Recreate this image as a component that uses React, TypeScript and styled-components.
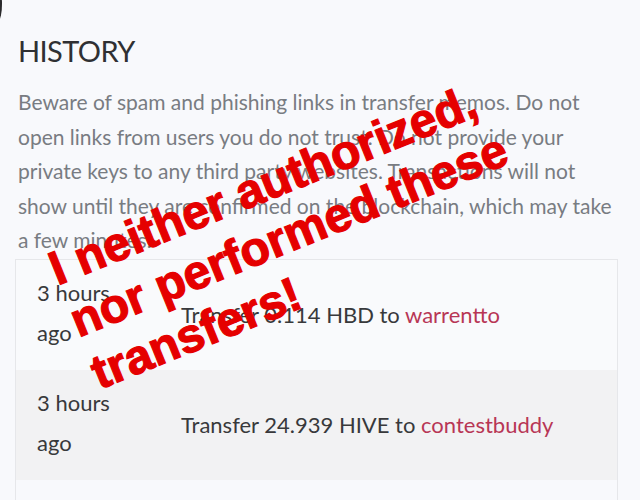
import React from 'react';
import styled, { createGlobalStyle } from 'styled-components';

type Transfer = {
	time: string;
	amount: string;
	to: string;
};

const transfers: Transfer[] = [
	{ time: '3 hours ago', amount: '0.114 HBD', to: 'warrentto' },
	{ time: '3 hours ago', amount: '24.939 HIVE', to: 'contestbuddy' },
];

const GlobalStyle = createGlobalStyle`
	html, body {
		margin: 0;
		padding: 0;
		background: #f8f9fc;
	}
	body {
		font-family: 'Source Sans Pro', Lato, 'Open Sans', sans-serif;
		-webkit-font-smoothing: antialiased;
	}
`;

export const App = () => {
	return (
		<Page>
			<GlobalStyle />
			<Section>
				<Title>HISTORY</Title>
				<Notice>
					Beware of spam and phishing links in transfer memos. Do not open links from users you do
					not trust. Do not provide your private keys to any third party websites. Transactions will
					not show until they are confirmed on the blockchain, which may take a few minutes.
				</Notice>
				<Table>
					{transfers.map((t, i) => (
						<Row key={i} striped={i % 2 === 1}>
							<TimeCell>{t.time}</TimeCell>
							<OpCell>
								Transfer {t.amount} to <UserLink href="#">{t.to}</UserLink>
							</OpCell>
						</Row>
					))}
				</Table>
			</Section>
			<Stamp>
				I neither authorized,
				<br />
				nor performed these
				<br />
				transfers!
			</Stamp>
		</Page>
	);
};

const Page = styled.div`
	position: relative;
	width: 640px;
	height: 500px;
	overflow: hidden;
	background: #f8f9fc;

	/* rounded screen corner */
	&::before {
		content: '';
		position: absolute;
		left: -5px;
		top: -12px;
		width: 7px;
		height: 32px;
		border-radius: 50%;
		background: #2a2a2c;
	}
`;

const Section = styled.div`
	display: flex;
	flex-direction: column;
	height: 100%;
	box-sizing: border-box;
	padding: 36px 22px 0 15px;
`;

const Title = styled.h2`
	margin: 0 0 0 3px;
	font-size: 29px;
	line-height: 30px;
	font-weight: 400;
	letter-spacing: -0.6px;
	color: #2f3033;
`;

const Notice = styled.p`
	margin: 19px 0 1px 3px;
	font-size: 21px;
	line-height: 34.5px;
	color: #787c82;
`;

const Table = styled.div`
	flex: 1;
	border: 1px solid #e6e7ea;
	border-bottom: none;
`;

const Row = styled.div<{ striped: boolean }>`
	display: grid;
	grid-template-columns: 122px 1fr;
	align-items: center;
	height: 110px;
	background: ${props => (props.striped ? '#f2f2f3' : '#f9fafc')};
	color: #38393b;
	font-size: 22px;
	line-height: 40px;
`;

const TimeCell = styled.div`
	padding-left: 21px;
	margin-top: -3px;
`;

const OpCell = styled.div`
	padding-left: 43px;
	white-space: nowrap;
`;

const UserLink = styled.a`
	color: #b83655;
	text-decoration: none;
`;

const Stamp = styled.div`
	position: absolute;
	left: 41px;
	top: 245px;
	transform: rotate(-22deg);
	transform-origin: 0 0;
	font-family: 'Liberation Sans', Arial, sans-serif;
	font-weight: 700;
	font-size: 48px;
	line-height: 56px;
	color: #e50000;
	-webkit-text-stroke: 1.2px #e50000;
	white-space: nowrap;
	pointer-events: none;
`;

export default App;
